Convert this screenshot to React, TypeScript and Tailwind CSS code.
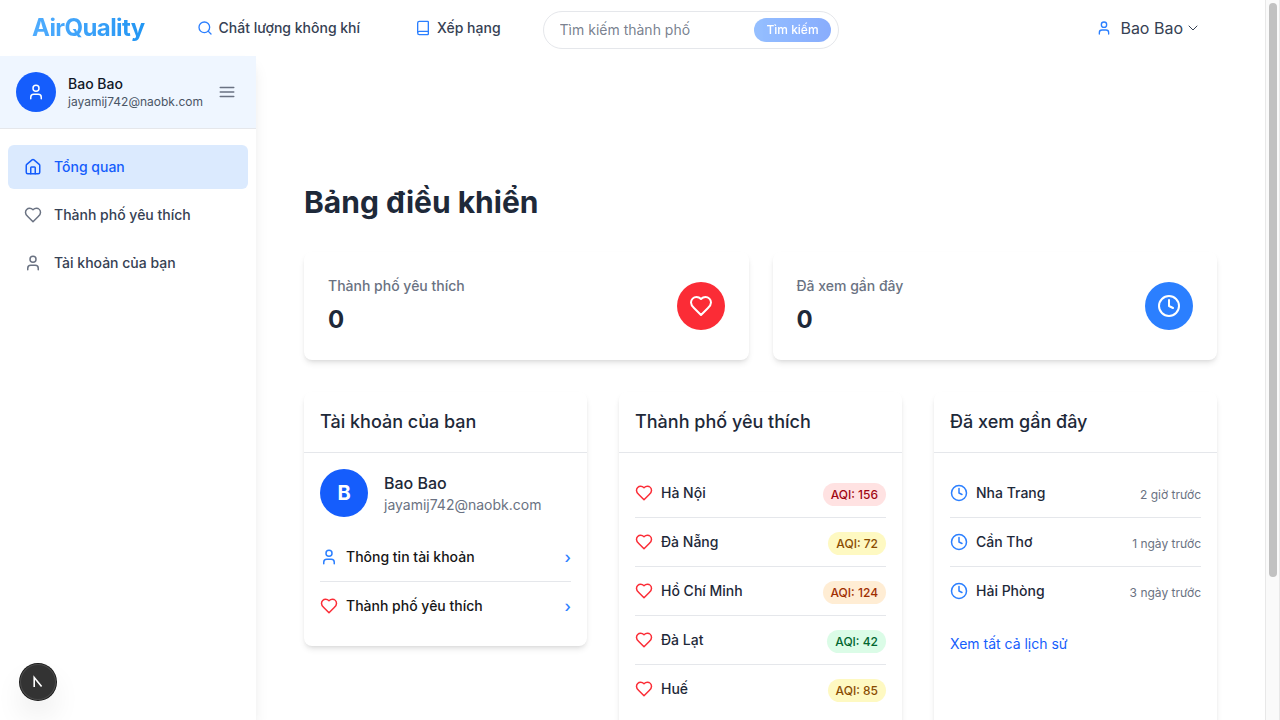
import { useState } from "react";
import { Book, ChevronDown, Clock, House, Search, User } from "lucide-react";

function HeartIcon({ size, className = "" }: { size: number; className?: string }) {
  return (
    <svg
      width={size}
      height={size}
      viewBox="0 0 24 24"
      fill="none"
      stroke="currentColor"
      strokeWidth="2"
      strokeLinecap="round"
      strokeLinejoin="round"
      className={className}
      aria-hidden="true"
    >
      <path d="M19 14c1.49-1.46 3-3.21 3-5.5A5.5 5.5 0 0 0 16.5 3c-1.76 0-3 .5-4.5 2-1.5-1.5-2.74-2-4.5-2A5.5 5.5 0 0 0 2 8.5c0 2.3 1.5 4.05 3 5.5l7 7Z" />
    </svg>
  );
}

const cities = [
  { name: "Hà Nội", aqi: 156, tone: "bg-red-100 text-red-800" },
  { name: "Đà Nẵng", aqi: 72, tone: "bg-yellow-100 text-yellow-800" },
  { name: "Hồ Chí Minh", aqi: 124, tone: "bg-orange-100 text-orange-800" },
  { name: "Đà Lạt", aqi: 42, tone: "bg-green-100 text-green-800" },
  { name: "Huế", aqi: 85, tone: "bg-yellow-100 text-yellow-800" },
];

const recent = [
  { name: "Nha Trang", time: "2 giờ trước" },
  { name: "Cần Thơ", time: "1 ngày trước" },
  { name: "Hải Phòng", time: "3 ngày trước" },
];

function Header() {
  const [query, setQuery] = useState("");
  return (
    <header className="flex h-14 shrink-0 items-center bg-white px-8">
      <a
        href="#"
        className="bg-linear-to-r from-[#4facfe] to-[#2196f3] bg-clip-text text-2xl font-bold tracking-tight text-transparent"
      >
        AirQuality
      </a>
      <nav className="ml-13 flex items-center gap-[55px] text-sm font-medium text-gray-700">
        <a href="#" className="flex items-center gap-1.5">
          <Search size={16} className="text-blue-500" />
          Chất lượng không khí
        </a>
        <a href="#" className="flex items-center gap-1.5">
          <Book size={16} className="text-blue-500" />
          Xếp hạng
        </a>
      </nav>
      <form
        className="mt-1 ml-[42px] flex h-[38px] w-74 items-center rounded-full border border-gray-200 pr-[7px] pl-4"
        onSubmit={(e) => e.preventDefault()}
      >
        <input
          type="text"
          aria-label="Tìm kiếm thành phố"
          placeholder="Tìm kiếm thành phố"
          value={query}
          onChange={(e) => setQuery(e.target.value)}
          className="min-w-0 flex-1 bg-transparent text-sm outline-none placeholder:text-gray-500/90"
        />
        <button
          type="submit"
          disabled={!query}
          className="h-6 rounded-full bg-linear-to-r from-blue-500 to-blue-600 px-3 text-xs font-medium text-white disabled:opacity-50"
        >
          Tìm kiếm
        </button>
      </form>
      <button type="button" className="mr-8 ml-auto flex items-center text-gray-700">
        <User size={16} className="mr-2 text-blue-500" />
        Bao Bao
        <ChevronDown size={16} strokeWidth={1.5} className="ml-0.5" />
      </button>
    </header>
  );
}

function Sidebar() {
  const item = "flex h-11 items-center gap-3 rounded-md px-4 text-sm font-medium";
  return (
    <aside className="z-10 w-64 shrink-0 bg-white shadow-lg">
      <div className="flex items-center justify-between border-b border-gray-200 bg-blue-50 p-4">
        <div className="flex items-center">
          <div className="flex size-10 items-center justify-center rounded-full bg-blue-600 text-white">
            <User size={18} />
          </div>
          <div className="ml-3">
            <p className="text-sm font-medium text-gray-900">Bao Bao</p>
            <p className="text-xs text-gray-600">jayamij742@naobk.com</p>
          </div>
        </div>
        <button type="button" aria-label="Menu" className="px-1 text-gray-500">
          <svg
            width="18"
            height="18"
            viewBox="0 0 24 24"
            fill="none"
            stroke="currentColor"
            strokeWidth="2"
            strokeLinecap="round"
          >
            <path d="M3 6h18M3 12h18M3 18h18" />
          </svg>
        </button>
      </div>
      <nav className="flex flex-col gap-1 px-2 py-4">
        <a href="#" className={`${item} bg-blue-100 text-blue-600`}>
          <House size={18} />
          Tổng quan
        </a>
        <a href="#" className={`${item} text-gray-700`}>
          <HeartIcon size={18} className="text-gray-500" />
          Thành phố yêu thích
        </a>
        <a href="#" className={`${item} text-gray-700`}>
          <User size={18} className="text-gray-500" />
          Tài khoản của bạn
        </a>
      </nav>
    </aside>
  );
}

function StatCard({ label, tone, icon }: { label: string; tone: string; icon: React.ReactNode }) {
  return (
    <div className="flex items-center justify-between rounded-lg bg-white p-6 shadow-md">
      <div>
        <p className="text-sm font-medium text-gray-500">{label}</p>
        <p className="mt-2 text-2xl font-bold text-gray-800">0</p>
      </div>
      <div className={`flex size-12 items-center justify-center rounded-full text-white ${tone}`}>{icon}</div>
    </div>
  );
}

function Panel({ title, className = "", children }: { title: string; className?: string; children: React.ReactNode }) {
  return (
    <section className={`rounded-lg bg-white shadow-md ${className}`}>
      <h2 className="border-b border-gray-200 p-4 text-lg font-medium text-gray-800">{title}</h2>
      <div className="p-4">{children}</div>
    </section>
  );
}

function Dashboard() {
  const row = "flex h-12 items-center justify-between box-content";
  return (
    <main className="min-w-0 flex-1 px-12 pt-32 pb-12">
      <h1 className="mb-8 text-3xl font-bold text-gray-800">Bảng điều khiển</h1>
      <div className="mb-8 grid grid-cols-2 gap-6">
        <StatCard label="Thành phố yêu thích" tone="bg-red-500" icon={<HeartIcon size={24} />} />
        <StatCard label="Đã xem gần đây" tone="bg-blue-500" icon={<Clock size={24} />} />
      </div>
      <div className="grid grid-cols-3 gap-8">
        <Panel title="Tài khoản của bạn" className="self-start">
          <div className="mb-4 flex items-center gap-4">
            <div className="flex size-12 items-center justify-center rounded-full bg-blue-600 text-xl font-bold text-white">
              B
            </div>
            <div>
              <p className="font-medium text-gray-800">Bao Bao</p>
              <p className="text-sm text-gray-500">jayamij742@naobk.com</p>
            </div>
          </div>
          <ul className="divide-y divide-gray-200 text-sm font-medium text-[#171717]">
            <li>
              <a href="#" className={row}>
                <span className="flex items-center gap-2">
                  <User size={18} className="text-blue-500" />
                  Thông tin tài khoản
                </span>
                <span className="text-base text-blue-500">›</span>
              </a>
            </li>
            <li>
              <a href="#" className={row}>
                <span className="flex items-center gap-2">
                  <HeartIcon size={18} className="text-red-500" />
                  Thành phố yêu thích
                </span>
                <span className="text-base text-blue-500">›</span>
              </a>
            </li>
          </ul>
        </Panel>
        <Panel title="Thành phố yêu thích">
          <ul className="divide-y divide-gray-200">
            {cities.map((c) => (
              <li key={c.name} className={row}>
                <span className="flex items-center gap-2 text-sm font-medium text-gray-800">
                  <HeartIcon size={18} className="text-red-500" />
                  {c.name}
                </span>
                <div>
                  <span className={`rounded-full px-2 py-1 text-xs font-medium ${c.tone}`}>AQI: {c.aqi}</span>
                </div>
              </li>
            ))}
          </ul>
        </Panel>
        <Panel title="Đã xem gần đây">
          <ul className="divide-y divide-gray-200">
            {recent.map((r) => (
              <li key={r.name} className={row}>
                <span className="flex items-center gap-2 text-sm font-medium text-gray-800">
                  <Clock size={18} className="text-blue-500" />
                  {r.name}
                </span>
                <div>
                  <span className="text-xs text-gray-500">{r.time}</span>
                </div>
              </li>
            ))}
          </ul>
          <div className="mt-4">
            <a href="#" className="text-sm text-blue-600">
              Xem tất cả lịch sử
            </a>
          </div>
        </Panel>
      </div>
    </main>
  );
}

export default function App() {
  return (
    <div className="flex h-screen overflow-hidden bg-white font-[Inter,'Noto_Sans',sans-serif] antialiased">
      <div className="flex min-w-0 flex-1 flex-col">
        <Header />
        <div className="flex min-h-0 flex-1">
          <Sidebar />
          <Dashboard />
        </div>
      </div>
      <div className="flex w-[15px] shrink-0 justify-center border-x border-[#e8e8e8] bg-[#fafafa] pt-[3px]" aria-hidden="true">
        <div className="h-4/5 w-2 rounded-full bg-[#c1c1c1]" />
      </div>
      <button
        type="button"
        aria-label="Dev tools"
        className="fixed bottom-5 left-5 z-20 flex size-9 items-center justify-center rounded-full bg-[#333333] shadow-[0_0_0_1px_#171717,inset_0_0_0_1px_#4a4a4a,0_16px_32px_-8px_rgba(0,0,0,0.24)]"
      >
        <svg width="12" height="14" viewBox="0 0 12 14" fill="none" stroke="white" strokeWidth="1.6">
          <path d="M2.2 12V2.4L9.6 11.4" />
        </svg>
      </button>
    </div>
  );
}
